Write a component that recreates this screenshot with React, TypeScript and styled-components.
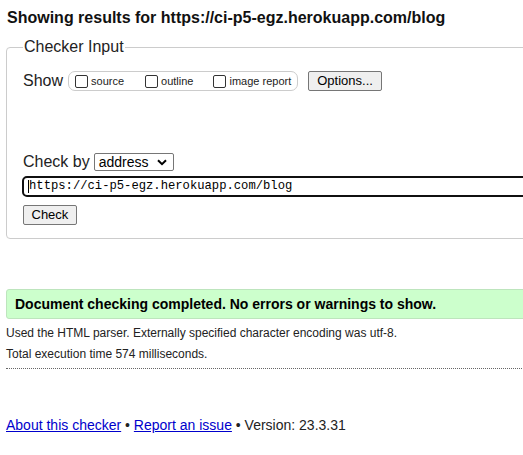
import React from "react";
import styled, { createGlobalStyle } from "styled-components";

const Global = createGlobalStyle`
  html, body { margin: 0; padding: 0; background: #fff; overflow: hidden; }
  body { font-family: "Liberation Sans", Arial, sans-serif; color: #000; }
`;

const Page = styled.div`
  width: 640px;
  padding: 0 0 0 6px;
`;

const Heading = styled.h2`
  margin: 0;
  padding: 8px 0 0 1px;
  font-size: 16px;
  line-height: 19px;
  font-weight: bold;
  color: #111;
`;

const Fieldset = styled.fieldset`
  margin: 11px 0 0 0;
  padding: 0 16px 13px 16px;
  border: 1px solid #ccc;
  border-radius: 4px;
  display: flex;
  flex-direction: column;
`;

const Legend = styled.legend`
  padding: 0 1px;
  margin-left: 0;
  font-size: 16px;
  line-height: 18px;
  color: #222;
`;

const Row = styled.div<{ $mt?: number }>`
  display: flex;
  align-items: center;
  height: 20px;
  margin-top: ${(p) => p.$mt ?? 0}px;
`;

const Label = styled.span`
  font-size: 16px;
  color: #222;
  margin-right: 5px;
`;

const Group = styled.div`
  display: flex;
  align-items: center;
  height: 18px;
  border: 1px solid #ccc;
  border-radius: 7px;
  padding: 0 6px 0 6px;
`;

const CheckItem = styled.label<{ $gap: number }>`
  display: flex;
  align-items: center;
  font-size: 11px;
  color: #222;
  margin-right: ${(p) => p.$gap}px;
`;

const Box = styled.span`
  width: 11px;
  height: 11px;
  border: 1px solid #333;
  border-radius: 2px;
  margin-right: 3px;
  background: #fff;
`;

const Button = styled.button`
  font-family: "Liberation Sans", Arial, sans-serif;
  font-size: 13px;
  color: #000;
  background: #efefef;
  border: 1px solid #767676;
  border-radius: 2px;
  padding: 0 7.5px;
  height: 20px;
  line-height: 18px;
`;

const OptionsButton = styled(Button)`
  margin-left: 10px;
  padding: 0 8px;
`;

const Select = styled.div`
  display: flex;
  align-items: center;
  justify-content: space-between;
  width: 80px;
  height: 18px;
  box-sizing: border-box;
  border: 1px solid #767676;
  border-radius: 2px;
  font-size: 14px;
  color: #000;
  padding: 0 6px 0 4px;
  margin-left: -1px;
`;

const UrlInput = styled.div`
  margin-top: 4px;
  height: 21px;
  box-sizing: border-box;
  border: 2px solid #101010;
  border-radius: 5px;
  font-family: "Liberation Mono", "Courier New", monospace;
  font-size: 12.2px;
  line-height: 17px;
  padding: 0 0 0 4px;
  margin-left: -1px;
  color: #000;
  display: flex;
  align-items: center;
`;

const Caret = styled.span`
  width: 1px;
  height: 13px;
  background: #000;
`;

const CheckRow = styled.div`
  margin-top: 8px;
  height: 20px;
`;

const Success = styled.div`
  margin-top: 50px;
  height: 30px;
  box-sizing: border-box;
  background: #ccffcc;
  border: 1px solid #bde5bd;
  border-radius: 3px;
  display: flex;
  align-items: center;
  padding-left: 8px;
  font-size: 14px;
  font-weight: bold;
  color: #000;
`;

const Info = styled.p<{ $mt: number }>`
  margin: ${(p) => p.$mt}px 0 0 0;
  font-size: 12px;
  line-height: 14px;
  color: #222;
`;

const Dotted = styled.div`
  margin-top: 7px;
  border-top: 1px dotted #666;
`;

const Footer = styled.div`
  margin-top: 48px;
  font-size: 14px;
  color: #222;
`;

const Link = styled.a`
  color: #00c;
  text-decoration: underline;
`;

export default function App() {
  return (
    <Page>
      <Global />
      <Heading>Showing results for https://ci-p5-egz.herokuapp.com/blog</Heading>
      <Fieldset>
        <Legend>Checker Input</Legend>
        <Row $mt={15}>
          <Label>Show</Label>
          <Group>
            <CheckItem $gap={21}><Box />source</CheckItem>
            <CheckItem $gap={20}><Box />outline</CheckItem>
            <CheckItem $gap={0}><Box />image report</CheckItem>
          </Group>
          <OptionsButton>Options...</OptionsButton>
        </Row>
        <Row $mt={61}>
          <Label>Check by</Label>
          <Select>
            address
            <svg width="10" height="7" viewBox="0 0 10 7">
              <path d="M1 1.2 L5 5.2 L9 1.2" fill="none" stroke="#000" strokeWidth="2" />
            </svg>
          </Select>
        </Row>
        <UrlInput>
          <Caret />
          https://ci-p5-egz.herokuapp.com/blog
        </UrlInput>
        <CheckRow>
          <Button>Check</Button>
        </CheckRow>
      </Fieldset>
      <Success>Document checking completed. No errors or warnings to show.</Success>
      <Info $mt={7}>Used the HTML parser. Externally specified character encoding was utf-8.</Info>
      <Info $mt={7}>Total execution time 574 milliseconds.</Info>
      <Dotted />
      <Footer>
        <Link href="#">About this checker</Link> • <Link href="#">Report an issue</Link> • Version: 23.3.31
      </Footer>
    </Page>
  );
}
